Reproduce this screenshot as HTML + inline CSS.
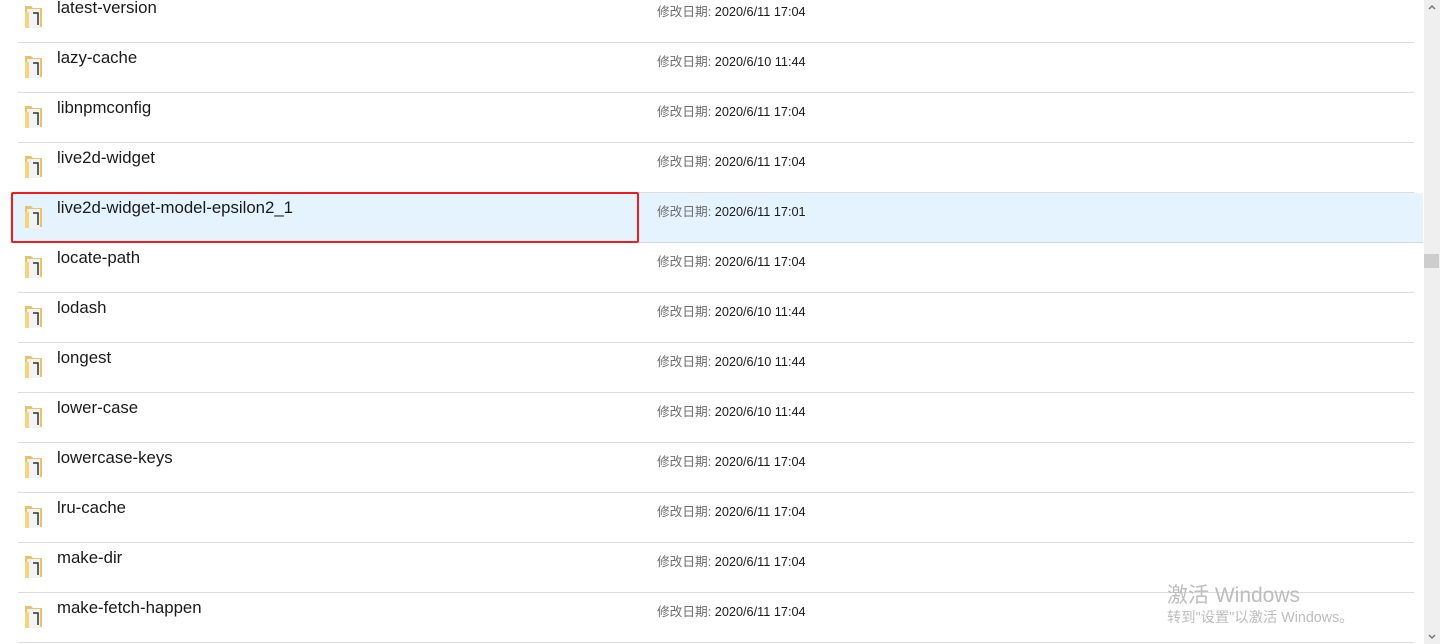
<!DOCTYPE html>
<html><head><meta charset="utf-8"><style>
body{margin:0;width:1440px;height:644px;background:#fff;overflow:hidden;position:relative;font-family:"Liberation Sans","Noto Sans CJK SC",sans-serif}
.row{position:absolute;left:18px;width:1396px;height:49px;border-bottom:1px solid #dcdcdc}
.row.sel{background:#e5f3ff;left:10px;width:1413px;border-bottom:1px solid #cfdce8}
.name{position:absolute;left:39px;top:5px;font-size:16.8px;color:#1a1a1a}
.sel .name{left:47px}
.date{position:absolute;left:639px;top:8px;font-size:12.7px;color:#1a1a1a}
.sel .date{left:647px}
.date span{color:#6d6d6d}
.ic{position:absolute;left:6px;top:10px;width:20px;height:26px}
.sel .ic{left:14px}
.red{position:absolute;left:11px;top:192px;width:624px;height:47px;border:2px solid #f01c1c;border-radius:2px}
.sb{position:absolute;left:1424px;top:0;width:16px;height:644px;background:#efefef}
.th{position:absolute;left:1424px;top:254px;width:15px;height:14px;background:#cdcdcd}
.wm{position:absolute;left:1167px;color:#bdbdbd;white-space:nowrap}
</style></head><body>
<div id="rows"></div>
<script>
var d=[["latest-version","2020/6/11 17:04"],["lazy-cache","2020/6/10 11:44"],["libnpmconfig","2020/6/11 17:04"],["live2d-widget","2020/6/11 17:04"],["live2d-widget-model-epsilon2_1","2020/6/11 17:01"],["locate-path","2020/6/11 17:04"],["lodash","2020/6/10 11:44"],["longest","2020/6/10 11:44"],["lower-case","2020/6/10 11:44"],["lowercase-keys","2020/6/11 17:04"],["lru-cache","2020/6/11 17:04"],["make-dir","2020/6/11 17:04"],["make-fetch-happen","2020/6/11 17:04"]];
var h="";
var ic='<svg class="ic" viewBox="0 0 20 26"><path d="M1 3h6l2 2h9v19H1z" fill="#e8c36a"/><path d="M3 6h13v19H3z" fill="#f3f3f3"/><path d="M1 9h4v16H1z" fill="#f5d47e"/><path d="M9 10h5v12" stroke="#333" stroke-width="1.5" fill="none"/></svg>';
d.forEach(function(r,i){h+='<div class="row'+(i==4?' sel':'')+'" style="top:'+(-7+i*50)+'px">'+ic+'<div class="name">'+r[0]+'</div><div class="date"><span>修改日期:</span> '+r[1]+'</div></div>';});
document.getElementById("rows").innerHTML=h;
</script>
<div class="red"></div>
<div class="sb"></div><div class="th"></div>
<svg style="position:absolute;left:1428px;top:4px" width="8" height="6" viewBox="0 0 8 6"><path d="M1 5L4 2L7 5" stroke="#777" stroke-width="1.5" fill="none"/></svg>
<svg style="position:absolute;left:1428px;top:634px" width="8" height="6" viewBox="0 0 8 6"><path d="M1 1L4 4L7 1" stroke="#777" stroke-width="1.5" fill="none"/></svg>
<div class="wm" style="top:579px;font-size:21px">激活 Windows</div>
<div class="wm" style="top:606px;font-size:14.3px">转到"设置"以激活 Windows。</div>
</body></html>
